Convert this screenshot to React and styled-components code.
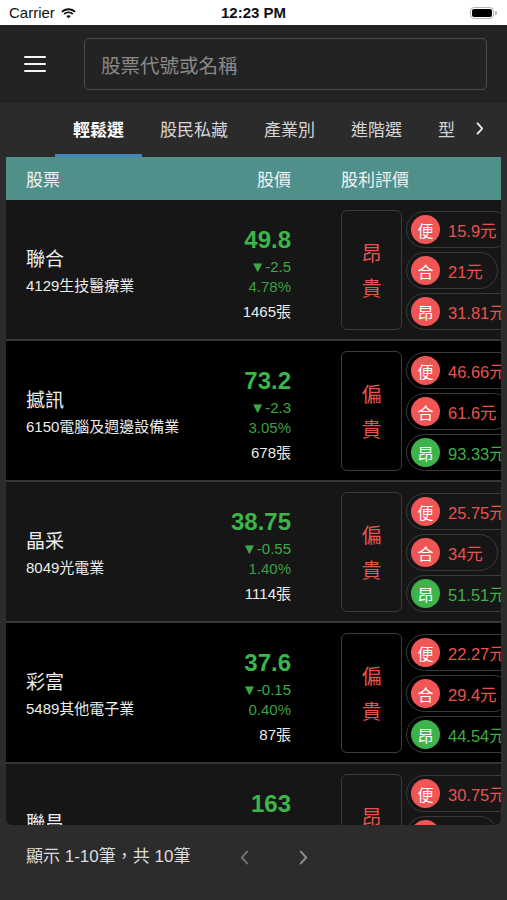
import React from "react";
import styled, { createGlobalStyle } from "styled-components";

const GlobalStyle = createGlobalStyle`
  html, body {
    margin: 0;
    padding: 0;
    background: #2c2c2c;
  }
  body {
    font-family: "Liberation Sans", "Noto Sans CJK TC", sans-serif;
    -webkit-font-smoothing: antialiased;
  }
`;

const Screen = styled.div`
  width: 507px;
  height: 900px;
  display: flex;
  flex-direction: column;
  background: #2c2c2c;
  overflow: hidden;
`;

const StatusBar = styled.div`
  height: 25px;
  background: #ffffff;
  display: flex;
  align-items: center;
  padding: 0 10px 0 9px;
  color: #111;
  font-size: 15px;
  position: relative;
  flex-shrink: 0;
`;

const Carrier = styled.div`
  display: flex;
  align-items: center;
  gap: 5px;
  font-weight: 500;
`;

const Clock = styled.div`
  position: absolute;
  left: 0;
  right: 0;
  text-align: center;
  font-weight: 700;
  pointer-events: none;
`;

const Battery = styled.div`
  margin-left: auto;
  display: flex;
  align-items: center;
`;

const BatteryBody = styled.div`
  width: 20px;
  height: 8px;
  border: 1.5px solid #b8b8b8;
  border-radius: 4px;
  padding: 1px;
  display: flex;
`;

const BatteryFill = styled.div`
  flex: 1;
  background: #000;
  border-radius: 2px;
`;

const BatteryNub = styled.div`
  width: 2px;
  height: 4px;
  margin-left: 1px;
  background: #b8b8b8;
  border-radius: 0 1px 1px 0;
`;

const Header = styled.div`
  height: 78px;
  background: #232323;
  display: flex;
  align-items: center;
  padding: 0 20px 0 24px;
  flex-shrink: 0;
`;

const MenuButton = styled.div`
  width: 22px;
  display: flex;
  flex-direction: column;
  gap: 4.5px;
  margin-right: 38px;
`;

const MenuLine = styled.span`
  display: block;
  height: 2.5px;
  background: #f4f4f4;
  border-radius: 1px;
`;

const SearchBox = styled.div`
  flex: 1;
  height: 50px;
  border: 1.5px solid #4b4b4b;
  border-radius: 5px;
  display: flex;
  align-items: center;
  padding-left: 16px;
  color: #8a8a8a;
  font-size: 19.5px;
  font-family: "Noto Sans CJK TC", sans-serif;
`;

const TabBar = styled.div`
  height: 54px;
  background: #2b2b2b;
  display: flex;
  flex-shrink: 0;
`;

const TabScroller = styled.div`
  flex: 1;
  display: flex;
  padding-left: 55px;
  overflow: hidden;
  white-space: nowrap;
`;

const Tab = styled.div`
  padding: 0 18px;
  display: flex;
  align-items: center;
  font-size: 17px;
  font-family: "Noto Sans CJK TC", sans-serif;
  font-weight: ${(p) => (p.$active ? 700 : 400)};
  color: ${(p) => (p.$active ? "#ffffff" : "#d6d6d6")};
  border-bottom: 3.5px solid ${(p) => (p.$active ? "#4186c4" : "transparent")};
  flex-shrink: 0;
`;

const TabArrow = styled.div`
  width: 51px;
  display: flex;
  align-items: center;
  justify-content: center;
  padding-right: 4px;
  padding-bottom: 3px;
  box-sizing: border-box;
  flex-shrink: 0;
`;

const Table = styled.div`
  flex: 1;
  margin: 0 6px;
  border-radius: 0 0 6px 6px;
  overflow: hidden;
  display: flex;
  flex-direction: column;
`;

const TableHead = styled.div`
  height: 43px;
  background: #4f918a;
  display: flex;
  align-items: center;
  padding-left: 20px;
  color: #f2f2f2;
  font-size: 17px;
  font-family: "Noto Sans CJK TC", sans-serif;
  flex-shrink: 0;
`;

const HeadName = styled.div`
  flex: 1;
`;

const HeadPrice = styled.div`
  margin-right: 50px;
`;

const HeadRating = styled.div`
  width: 160px;
  flex-shrink: 0;
`;

const Row = styled.div`
  height: 139px;
  flex-shrink: 0;
  display: flex;
  padding-left: 20px;
  background: ${(p) => (p.$odd ? "#161616" : "#000000")};
  border-bottom: 2px solid #363636;
`;

const NameCol = styled.div`
  flex: 1;
  padding-top: 47px;
  color: #ededed;
`;

const StockName = styled.div`
  font-size: 19px;
  line-height: 26px;
`;

const StockSub = styled.div`
  font-size: 15px;
  line-height: 20px;
  margin-top: 3px;
  white-space: nowrap;
`;

const PriceCol = styled.div`
  margin-right: 50px;
  padding-top: 26px;
  text-align: right;
`;

const Price = styled.div`
  font-size: 24px;
  font-weight: 700;
  line-height: 28px;
  color: #3cb54a;
`;

const Change = styled.div`
  font-size: 15px;
  line-height: 20px;
  margin-top: 3px;
  color: #3ea845;
`;

const Pct = styled.div`
  font-size: 15px;
  line-height: 20px;
  color: #3a9f41;
`;

const Volume = styled.div`
  font-size: 15px;
  line-height: 20px;
  margin-top: 5px;
  color: #ececec;
`;

const RatingBox = styled.div`
  width: 59px;
  height: 118px;
  margin-top: 10px;
  border: 1px solid #3c3c3c;
  border-radius: 6px;
  display: flex;
  flex-direction: column;
  align-items: center;
  justify-content: center;
  color: #e8524e;
  font-size: 20px;
  line-height: 35px;
  font-family: "Noto Sans CJK TC", sans-serif;
  flex-shrink: 0;
`;

const Pills = styled.div`
  width: 95px;
  margin-left: 4px;
  padding-top: 11px;
  display: flex;
  flex-direction: column;
  align-items: flex-start;
  gap: 4px;
  flex-shrink: 0;
`;

const Pill = styled.div`
  height: 35px;
  border: 1.5px solid #3a3a3a;
  border-radius: 19px;
  display: flex;
  align-items: center;
  padding: 0 14px 0 4px;
  white-space: nowrap;
  flex-shrink: 0;
`;

const Badge = styled.div`
  width: 29px;
  height: 29px;
  border-radius: 50%;
  background: ${(p) => (p.$good ? "#3cb44b" : "#f25555")};
  color: #fff;
  font-size: 16px;
  font-family: "Noto Sans CJK TC", sans-serif;
  display: flex;
  align-items: center;
  justify-content: center;
  flex-shrink: 0;
`;

const PillValue = styled.span`
  margin-left: 8px;
  font-size: 16.5px;
  color: ${(p) => (p.$good ? "#3fae45" : "#e8524e")};
`;

const Footer = styled.div`
  height: 75px;
  flex-shrink: 0;
  display: flex;
  align-items: flex-start;
  padding: 20px 0 0 26px;
  box-sizing: border-box;
  color: #dcdcdc;
  font-size: 17px;
  line-height: 24px;
`;

const FooterText = styled.span`
  white-space: nowrap;
`;

const Pager = styled.div`
  display: flex;
  align-items: center;
  height: 24px;
  margin-left: 50px;
  gap: 50px;
`;

const stocks = [
  {
    name: "聯合",
    sub: "4129生技醫療業",
    price: "49.8",
    change: "▼-2.5",
    pct: "4.78%",
    vol: "1465張",
    rating: ["昂", "貴"],
    pills: [
      ["便", "15.9元", false],
      ["合", "21元", false],
      ["昂", "31.81元", false],
    ],
  },
  {
    name: "撼訊",
    sub: "6150電腦及週邊設備業",
    price: "73.2",
    change: "▼-2.3",
    pct: "3.05%",
    vol: "678張",
    rating: ["偏", "貴"],
    pills: [
      ["便", "46.66元", false],
      ["合", "61.6元", false],
      ["昂", "93.33元", true],
    ],
  },
  {
    name: "晶采",
    sub: "8049光電業",
    price: "38.75",
    change: "▼-0.55",
    pct: "1.40%",
    vol: "1114張",
    rating: ["偏", "貴"],
    pills: [
      ["便", "25.75元", false],
      ["合", "34元", false],
      ["昂", "51.51元", true],
    ],
  },
  {
    name: "彩富",
    sub: "5489其他電子業",
    price: "37.6",
    change: "▼-0.15",
    pct: "0.40%",
    vol: "87張",
    rating: ["偏", "貴"],
    pills: [
      ["便", "22.27元", false],
      ["合", "29.4元", false],
      ["昂", "44.54元", true],
    ],
  },
  {
    name: "聯昌",
    sub: "2431電子零組件業",
    price: "163",
    change: "▼-2",
    pct: "1.21%",
    vol: "2005張",
    rating: ["昂", "貴"],
    pills: [
      ["便", "30.75元", false],
      ["合", "41元", false],
      ["昂", "61.5元", false],
    ],
  },
];

const tabs = ["輕鬆選", "股民私藏", "產業別", "進階選", "型態選"];

const Chevron = ({ dir = "right", color = "#ddd", size = 14 }) => (
  <svg width={size * 0.6} height={size} viewBox="0 0 8 14" fill="none">
    <polyline
      points={dir === "right" ? "1.5,1.5 6.5,7 1.5,12.5" : "6.5,1.5 1.5,7 6.5,12.5"}
      stroke={color}
      strokeWidth="2"
      strokeLinecap="round"
      strokeLinejoin="round"
    />
  </svg>
);

const Wifi = () => (
  <svg width="17" height="12" viewBox="0 0 17 12">
    <path d="M8.5 3.2c2.3 0 4.4.9 5.9 2.4l1.3-1.3C13.8 2.4 11.3 1.3 8.5 1.3S3.2 2.4 1.3 4.3l1.3 1.3c1.5-1.5 3.6-2.4 5.9-2.4z" fill="#111" />
    <path d="M8.5 6.3c1.4 0 2.6.5 3.6 1.4l1.3-1.3C12.1 5.1 10.4 4.4 8.5 4.4S4.9 5.1 3.6 6.4l1.3 1.3c1-.9 2.2-1.4 3.6-1.4z" fill="#111" />
    <path d="M8.5 11.4l2.3-2.3c-.6-.6-1.4-.9-2.3-.9s-1.7.3-2.3.9z" fill="#111" />
  </svg>
);

const StockRow = ({ stock, odd }) => (
  <Row $odd={odd}>
    <NameCol>
      <StockName>{stock.name}</StockName>
      <StockSub>{stock.sub}</StockSub>
    </NameCol>
    <PriceCol>
      <Price>{stock.price}</Price>
      <Change>{stock.change}</Change>
      <Pct>{stock.pct}</Pct>
      <Volume>{stock.vol}</Volume>
    </PriceCol>
    <RatingBox>
      {stock.rating.map((c) => (
        <span key={c}>{c}</span>
      ))}
    </RatingBox>
    <Pills>
      {stock.pills.map(([label, value, good]) => (
        <Pill key={label}>
          <Badge $good={good}>{label}</Badge>
          <PillValue $good={good}>{value}</PillValue>
        </Pill>
      ))}
    </Pills>
  </Row>
);

const App = () => {
  return (
    <Screen>
      <GlobalStyle />
      <StatusBar>
        <Carrier>
          Carrier <Wifi />
        </Carrier>
        <Clock>12:23 PM</Clock>
        <Battery>
          <BatteryBody>
            <BatteryFill />
          </BatteryBody>
          <BatteryNub />
        </Battery>
      </StatusBar>

      <Header>
        <MenuButton>
          <MenuLine />
          <MenuLine />
          <MenuLine />
        </MenuButton>
        <SearchBox>股票代號或名稱</SearchBox>
      </Header>

      <TabBar>
        <TabScroller>
          {tabs.map((t, i) => (
            <Tab key={t} $active={i === 0}>
              {t}
            </Tab>
          ))}
        </TabScroller>
        <TabArrow>
          <Chevron color="#f0f0f0" size={13} />
        </TabArrow>
      </TabBar>

      <Table>
        <TableHead>
          <HeadName>股票</HeadName>
          <HeadPrice>股價</HeadPrice>
          <HeadRating>股利評價</HeadRating>
        </TableHead>
        {stocks.map((s, i) => (
          <StockRow key={s.name} stock={s} odd={i % 2 === 0} />
        ))}
      </Table>

      <Footer>
        <FooterText>顯示 1-10筆，共 10筆</FooterText>
        <Pager>
          <Chevron dir="left" color="#6e6e6e" size={15} />
          <Chevron dir="right" color="#8a8a8a" size={15} />
        </Pager>
      </Footer>
    </Screen>
  );
};

export default App;
